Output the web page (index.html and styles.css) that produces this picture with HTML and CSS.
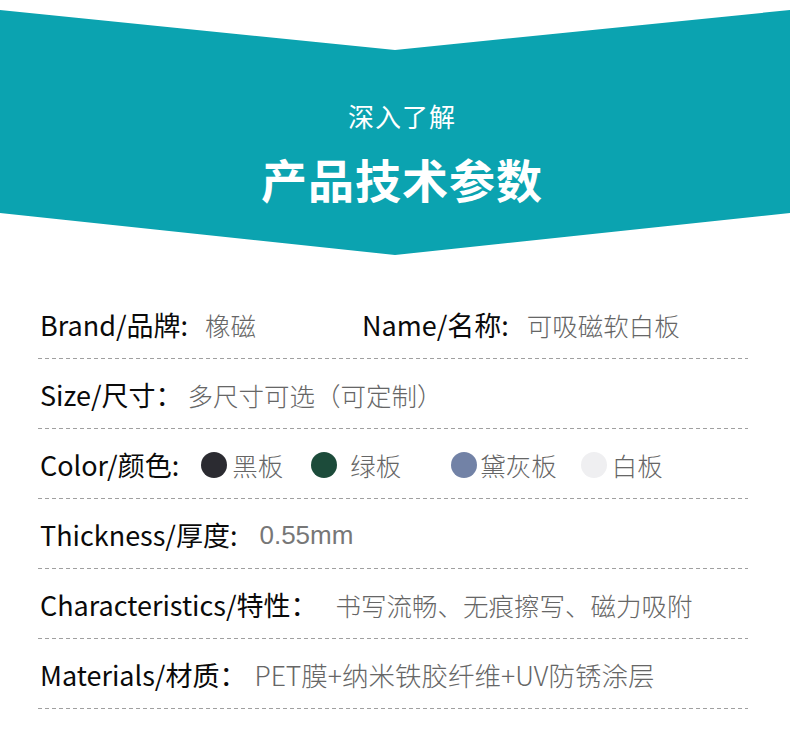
FILE: index.html
```html
<!DOCTYPE html>
<html lang="zh">
<head>
<meta charset="utf-8">
<link rel="stylesheet" href="styles.css">
</head>
<body>
<header class="banner">
  <div class="sub">深入了解</div>
  <h1 class="title">产品技术参数</h1>
</header>
<section class="specs">
  <div class="row">
    <div class="pair pair-brand"><span class="label">Brand/品牌:</span><span class="value v-brand">橡磁</span></div>
    <div class="pair"><span class="label">Name/名称:</span><span class="value v-name">可吸磁软白板</span></div>
  </div>
  <div class="row">
    <span class="label">Size/尺寸：</span><span class="value v-size">多尺寸可选（可定制）</span>
  </div>
  <div class="row">
    <span class="label">Color/颜色:</span>
    <span class="swatch sw1"><span class="dot dot-black"></span><span class="value">黑板</span></span>
    <span class="swatch sw2"><span class="dot dot-green"></span><span class="value">绿板</span></span>
    <span class="swatch sw3"><span class="dot dot-blue"></span><span class="value">黛灰板</span></span>
    <span class="swatch sw4"><span class="dot dot-white"></span><span class="value">白板</span></span>
  </div>
  <div class="row">
    <span class="label">Thickness/厚度:</span><span class="value num">0.55mm</span>
  </div>
  <div class="row">
    <span class="label">Characteristics/特性：</span><span class="value v-char">书写流畅、无痕擦写、磁力吸附</span>
  </div>
  <div class="row">
    <span class="label">Materials/材质：</span><span class="value v-mat">PET膜+纳米铁胶纤维+UV防锈涂层</span>
  </div>
</section>
</body>
</html>
```

FILE: styles.css
```css
html, body {
  margin: 0;
  padding: 0;
  background: #ffffff;
}
body {
  width: 790px;
  font-family: "Noto Sans CJK SC", "Noto Sans", sans-serif;
}
.banner {
  height: 255px;
  background: #0ba3b0;
  clip-path: polygon(0 10px, 50% 50px, 100% 10px, 100% 213px, 50% 255px, 0 213px);
  display: flex;
  flex-direction: column;
  align-items: center;
  padding-left: 14px;
  box-sizing: border-box;
  color: #ffffff;
}
.sub {
  margin-top: 99px;
  font-size: 26px;
  line-height: 34px;
  letter-spacing: 1px;
}
.title {
  margin: 20px 0 0;
  font-size: 46px;
  line-height: 50px;
  font-weight: 700;
  letter-spacing: 1px;
}
.specs {
  margin: 34px 42px 0 38px;
}
.row {
  display: flex;
  align-items: center;
  padding: 18px 0 15px 2px;
  height: 36px;
  background-image: repeating-linear-gradient(to right, #a0a0a0 0 4px, transparent 4px 7px);
  background-size: 100% 1px;
  background-position: left bottom;
  background-repeat: no-repeat;
  border-bottom: 1px solid transparent;
  background-origin: border-box;
}
.pair {
  display: flex;
  align-items: center;
}
.pair-brand {
  width: 322px;
}
.label {
  font-size: 27px;
  line-height: 36px;
  color: #0a0a0a;
  white-space: nowrap;
}
.value {
  font-size: 25.5px;
  line-height: 36px;
  color: #666666;
  font-weight: 300;
  margin-left: 8px;
  white-space: nowrap;
}
.v-brand { margin-left: 17px; }
.v-name { margin-left: 18px; }
.v-size { margin-left: 5px; }
.v-char { margin-left: 18px; }
.v-mat { margin-left: 8px; font-size: 26.5px; }
.num {
  font-family: "Liberation Sans", Arial, sans-serif;
  font-weight: 400;
  font-size: 26px;
  color: #777777;
  margin-left: 22px;
}
.swatch {
  display: flex;
  align-items: center;
}
.sw1 { margin-left: 22px; }
.sw2 { margin-left: 28px; }
.sw3 { margin-left: 50px; }
.sw4 { margin-left: 24px; }
.sw1 .value { margin-left: 5px; }
.sw2 .value { margin-left: 13px; }
.sw3 .value { margin-left: 3px; }
.sw4 .value { margin-left: 5px; }
.dot {
  width: 26px;
  height: 26px;
  border-radius: 50%;
  display: inline-block;
}
.dot-black { background: #2b2b31; }
.dot-green { background: #1c4b3a; }
.dot-blue { background: #7282a6; }
.dot-white { background: #efeff1; }
```
